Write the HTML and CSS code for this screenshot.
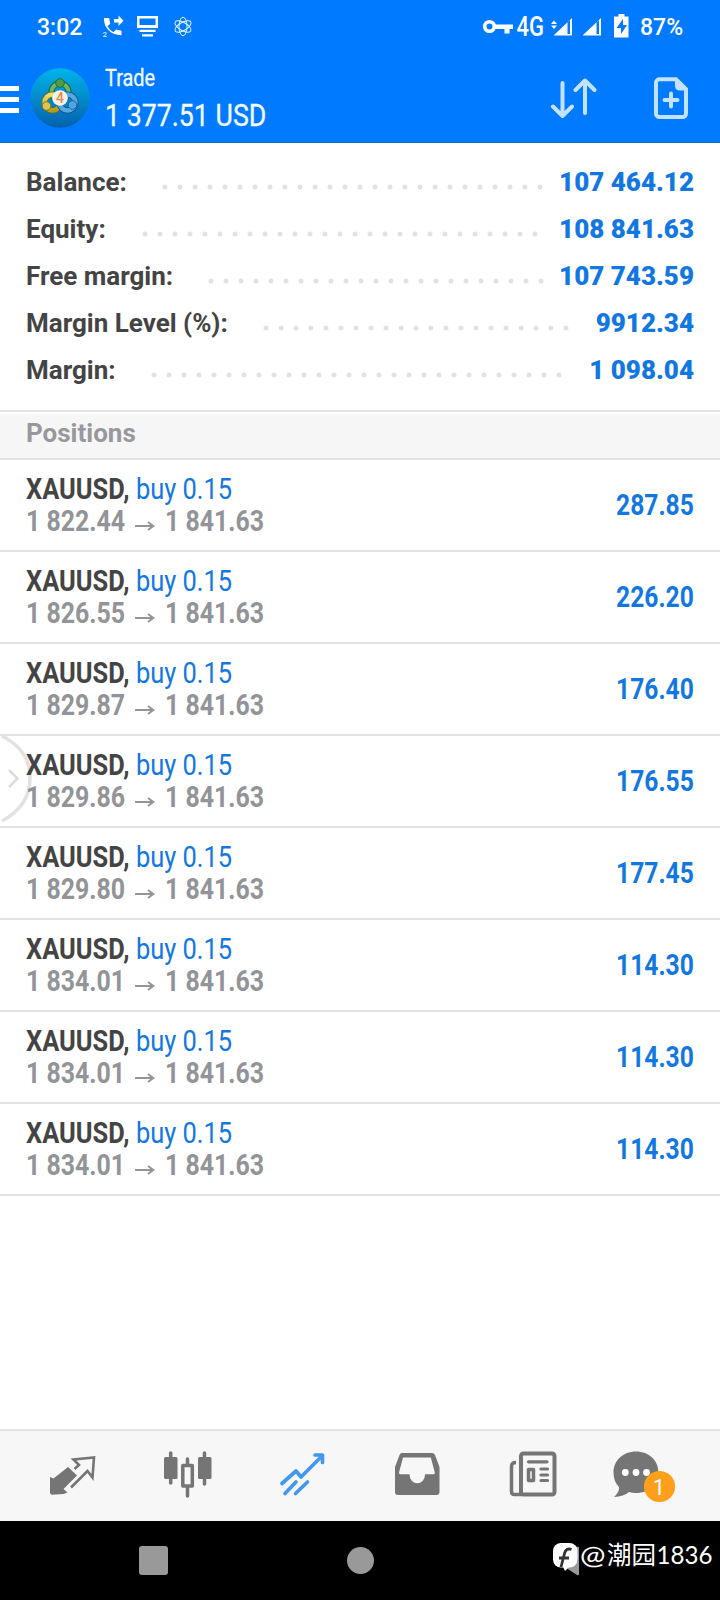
FILE: index.html
```html
<!DOCTYPE html>
<html lang="en">
<head>
<meta charset="utf-8">
<title>Trade</title>
<link rel="stylesheet" href="styles.css">
</head>
<body>
<div class="screen">
  <div class="status">
    <span class="clock">3:02</span>
    <svg class="status-left" width="100" height="44" viewBox="95 0 100 44">
      <g fill="#fff"><path d="M104 18h5l1.300 5.800-2.800 2.400q2 4 6 6l2.600-2.800 5.400 1.300V35.200C111 35.200 103.500 28 104 18z"/><path d="M114 19h4.500v-3.500l5 5.200-5 5.200v-3.500H114z"/></g>
      <text x="102.500" y="37" font-size="8" fill="#d6eaff">2</text>
      <g fill="#fff"><path d="M137 16h21v12h-21zm2.500 2.500v6.500h16v-6.500z" fill-rule="evenodd"/><path d="M139.500 29.800h16v2.200h-16zM142 34.300h11v2.200h-11z"/></g>
      <g fill="none" stroke="#e4f3ff" stroke-width="1"><ellipse cx="183" cy="26.500" rx="4" ry="9.300"/><ellipse cx="183" cy="26.500" rx="4" ry="9" transform="rotate(60 183 26.500)"/><ellipse cx="183" cy="26.500" rx="4" ry="9" transform="rotate(120 183 26.500)"/></g>
    </svg>
    <svg class="status-right" width="160" height="44" viewBox="480 0 160 44" fill="#fff">
      <circle cx="489.500" cy="26.500" r="4.800" fill="none" stroke="#fff" stroke-width="3.600"/>
      <path d="M494 24.500h19v4.500h-3.500v4.500h-5V29H494z"/>
      <text x="516.500" y="36" font-size="27" textLength="27.500" lengthAdjust="spacingAndGlyphs">4G</text>
      <path d="M551 24l3-3.500 3 3.500zM551 25.500h6l-3 3.500z"/>
      <path d="M553.500 35.500L572 18v17.500zm14-13v11.500h2.500V20.300z" fill-rule="evenodd"/>
      <path d="M582.500 35.500L601 18v17.500zm14-13v11.500h2.500V20.300z" fill-rule="evenodd"/>
      <path d="M618.500 14h6v2.500h4v21h-14.500v-21h4.500z"/>
      <path d="M623 19l-6.500 9h4.500v6l6-9h-4z" fill="#007aff"/>
    </svg>
    <span class="battery">87%</span>
  </div>
  <div class="header">
    <svg class="menu" width="20" height="28" viewBox="0 0 20 28" fill="#fff"><path d="M0 0h19v5H0zM0 11h19v5H0zM0 22h19v5H0z"/></svg>
    <svg class="logo" width="60" height="60" viewBox="0 0 60 60">
      <defs>
        <linearGradient id="sky" x1="0" y1="0" x2="0" y2="1"><stop offset="0" stop-color="#00b5ea"/><stop offset="1" stop-color="#0560ad"/></linearGradient>
        <linearGradient id="gold" x1="0" y1="0" x2="0" y2="1"><stop offset="0" stop-color="#e9e06c"/><stop offset="1" stop-color="#b49c1c"/></linearGradient>
      </defs>
      <circle cx="30" cy="30" r="29.700" fill="url(#sky)"/>
      <circle cx="30" cy="24" r="8.500" fill="none" stroke="#1f6a45" stroke-width="6"/><circle cx="30" cy="24" r="8.500" fill="none" stroke="#6fb860" stroke-width="4"/>
      <circle cx="22.500" cy="34.500" r="8" fill="none" stroke="#6f6c1b" stroke-width="6"/><circle cx="22.500" cy="34.500" r="8" fill="none" stroke="url(#gold)" stroke-width="4.500"/>
      <circle cx="37.500" cy="34.500" r="8" fill="none" stroke="#134f8f" stroke-width="6"/><circle cx="37.500" cy="34.500" r="8" fill="none" stroke="#55a9e2" stroke-width="4.500"/>
      <circle cx="30" cy="15" r="4.300" fill="#4c9d4a" stroke="#2b6c3b"/>
      <circle cx="16.500" cy="38" r="4.300" fill="#d9c552" stroke="#857718"/>
      <circle cx="42.500" cy="37" r="4.300" fill="#4da6df" stroke="#1f64a2"/>
      <circle cx="30" cy="30" r="7.800" fill="#f4f1ed"/>
      <text x="30" y="35" font-size="14" text-anchor="middle" font-weight="500" fill="#ee8a42">4</text>
    </svg>
    <div class="titles">
      <span class="title cond">Trade</span>
      <span class="total cond">1 377.51 USD</span>
    </div>
    <svg class="sort" width="48" height="42" viewBox="0 0 48 42" fill="none" stroke="#c3e2ff" stroke-width="4" stroke-linecap="round" stroke-linejoin="round"><path d="M12.500 5v33M3 28.500l9.500 9.500 9.500-9.500M35 35V2.500M25.500 12L35 2.500l9.500 9.500"/></svg>
    <svg class="new" width="36" height="44" viewBox="0 0 36 44" fill="none" stroke="#c3e2ff"><path d="M7 3.300h16L33 13v24.500a3.500 3.500 0 0 1-3.500 3.500H6.500A3.500 3.500 0 0 1 3 37.500v-31A3.500 3.500 0 0 1 7 3.300z" stroke-width="4"/><path d="M22 3v6.500q0 5 5 5h6V12z" fill="#c3e2ff" stroke="none"/><path d="M18 17.500v13M11.500 24h13" stroke-width="4" stroke-linecap="round"/></svg>
  </div>

  <div class="summary">
    <div class="line"><span>Balance:</span><svg class="dots" height="6"><line x1="38" y1="3" x2="416" y2="3"/></svg><b>107 464.12</b></div>
    <div class="line"><span>Equity:</span><svg class="dots" height="6"><line x1="39" y1="3" x2="432" y2="3"/></svg><b>108 841.63</b></div>
    <div class="line"><span>Free margin:</span><svg class="dots" height="6"><line x1="38" y1="3" x2="371" y2="3"/></svg><b>107 743.59</b></div>
    <div class="line"><span>Margin Level (%):</span><svg class="dots" height="6"><line x1="38" y1="3" x2="341" y2="3"/></svg><b>9912.34</b></div>
    <div class="line"><span>Margin:</span><svg class="dots" height="6"><line x1="38" y1="3" x2="446" y2="3"/></svg><b>1 098.04</b></div>
  </div>
  <div class="section">Positions</div>

  <div class="positions">
    <div class="row"><div class="info"><div class="deal cond"><b>XAUUSD,</b> buy 0.15</div><div class="prices"><span class="cond">1 822.44</span><svg width="20" height="12"><use href="#arrow"/></svg><span class="cond">1 841.63</span></div></div><b class="profit cond">287.85</b></div>
    <div class="row"><div class="info"><div class="deal cond"><b>XAUUSD,</b> buy 0.15</div><div class="prices"><span class="cond">1 826.55</span><svg width="20" height="12"><use href="#arrow"/></svg><span class="cond">1 841.63</span></div></div><b class="profit cond">226.20</b></div>
    <div class="row"><div class="info"><div class="deal cond"><b>XAUUSD,</b> buy 0.15</div><div class="prices"><span class="cond">1 829.87</span><svg width="20" height="12"><use href="#arrow"/></svg><span class="cond">1 841.63</span></div></div><b class="profit cond">176.40</b></div>
    <div class="row"><svg class="handle" width="34" height="92" viewBox="0 0 34 92" fill="none" stroke="#e2e2e2"><path d="M2 2Q30 16 30 44T2 87" stroke-width="3.500"/><path d="M9 36l8.500 8.500L9 53" stroke="#dcdcdc" stroke-width="2.500"/></svg><div class="info"><div class="deal cond"><b>XAUUSD,</b> buy 0.15</div><div class="prices"><span class="cond">1 829.86</span><svg width="20" height="12"><use href="#arrow"/></svg><span class="cond">1 841.63</span></div></div><b class="profit cond">176.55</b></div>
    <div class="row"><div class="info"><div class="deal cond"><b>XAUUSD,</b> buy 0.15</div><div class="prices"><span class="cond">1 829.80</span><svg width="20" height="12"><use href="#arrow"/></svg><span class="cond">1 841.63</span></div></div><b class="profit cond">177.45</b></div>
    <div class="row"><div class="info"><div class="deal cond"><b>XAUUSD,</b> buy 0.15</div><div class="prices"><span class="cond">1 834.01</span><svg width="20" height="12"><use href="#arrow"/></svg><span class="cond">1 841.63</span></div></div><b class="profit cond">114.30</b></div>
    <div class="row"><div class="info"><div class="deal cond"><b>XAUUSD,</b> buy 0.15</div><div class="prices"><span class="cond">1 834.01</span><svg width="20" height="12"><use href="#arrow"/></svg><span class="cond">1 841.63</span></div></div><b class="profit cond">114.30</b></div>
    <div class="row"><div class="info"><div class="deal cond"><b>XAUUSD,</b> buy 0.15</div><div class="prices"><span class="cond">1 834.01</span><svg width="20" height="12"><use href="#arrow"/></svg><span class="cond">1 841.63</span></div></div><b class="profit cond">114.30</b></div>
  </div>

  <svg class="tabs" width="720" height="90" viewBox="0 1431 720 90" fill="#757575" stroke-linejoin="round">
    <path d="M50 1477l3.500 1.500L68 1467l9 8.500L63.500 1489l4 3.500-4 1.500-12 .8-1.500-1.500z"/>
    <path d="M71 1487.500l16.500-16.500 5 6.500 1.500-20-20.500 2 5.500 5.500-4.500 4" fill="none" stroke="#757575" stroke-width="2.600" stroke-linejoin="miter"/>
    <g><rect x="164" y="1457" width="13.500" height="22" rx="1.500"/><rect x="198" y="1457" width="13.500" height="22" rx="1.500"/><path d="M170.700 1453v30M204.500 1453v31M187.500 1459v6M187.500 1488v8" stroke="#757575" stroke-width="3.500" stroke-linecap="round"/><rect x="182.800" y="1465.500" width="9.500" height="20.500" fill="none" stroke="#757575" stroke-width="3.500"/></g>
    <g fill="none" stroke="#4399f2" stroke-width="3.700" stroke-linecap="round"><path d="M282 1483.500l14-12.500 5 6 21-21M315 1455h7.500v7.500M285 1493.500l11-11.500M295.500 1493.500l12-11.500"/></g>
    <path d="M402 1453h30q2 0 3 2l4.500 12v25q0 3-3 3H398q-3 0-3-3v-25l4.500-12q.8-2 2.500-2zm1 4.500l-4 15q-.2 1.800 1.200 1.800h9.300a7.800 9 0 0 0 15.600 0h8.500q1.500 0 1.200-1.800l-4-15z" fill-rule="evenodd"/>
    <g fill="none" stroke="#757575" stroke-width="4"><rect x="521" y="1453.500" width="33.500" height="41" rx="2.500"/><path d="M516 1462.500q-4.500 0-4.500 4v25q0 3 3 3H522" stroke-width="3.500"/><path d="M528.500 1461.800H547M541 1469h6.500M541 1475h6.500M541 1480.500h6.500" stroke-width="3.200" stroke-linecap="round"/><rect x="528.500" y="1469.500" width="5" height="11" stroke-width="3.500"/></g>
    <path d="M636 1451.500c13 0 22.500 9 22.500 21S649 1493 636 1493q-4 0-7-1-5 4.500-15 5 5.500-5 5-10-5.500-5.500-5.500-14.500c0-12 9.500-21 22.500-21z"/>
    <g fill="#fff"><circle cx="625.300" cy="1472.500" r="3.400"/><circle cx="636" cy="1472.500" r="3.400"/><circle cx="646.500" cy="1472.500" r="3.400"/></g>
    <circle cx="659.500" cy="1486.500" r="15.600" fill="#ff9f1c"/>
    <text x="659" y="1494.500" font-size="22" text-anchor="middle" fill="#fff">1</text>
  </svg>
  <div class="sysbar">
    <svg width="720" height="79" viewBox="0 1521 720 79" fill="#999">
      <rect x="139" y="1546" width="29" height="29" rx="3"/><circle cx="360.500" cy="1560.500" r="13.500"/><path d="M579 1547v27q0 2-2 1l-23-15 22-13.500z"/>
      <rect x="553" y="1543" width="24.500" height="24.500" rx="8" fill="#fff"/><path d="M563 1567l2 4 5-5z" fill="#fff"/>
      <path d="M571.500 1549.500q-5.500-2-7 4l-3.500 13.500M559 1558h10" stroke="#333" stroke-width="2.800" fill="none"/>
      <text class="mark" y="1564" fill="#fff"><tspan x="580" textLength="25.500" lengthAdjust="spacingAndGlyphs">@</tspan><tspan x="607" textLength="49" lengthAdjust="spacingAndGlyphs">潮园</tspan><tspan x="656.500" textLength="56" lengthAdjust="spacingAndGlyphs">1836</tspan></text>
    </svg>
  </div>
</div>
<svg class="defs" width="0" height="0"><defs><path id="arrow" d="M0 6h18M13 2l5.300 4L13 10" fill="none" stroke="#929497" stroke-width="2"/></defs></svg>
</body>
</html>
```
FILE: styles.css
```css
body { margin: 0; background: #fff; font-family: Roboto, "Noto Sans CJK SC", sans-serif; }
.screen { width: 720px; height: 1600px; display: flex; flex-direction: column; overflow: hidden; }
svg { display: block; flex: none; }
.defs { position: absolute; }
.cond { display: inline-block; transform: scaleX(.83); transform-origin: left; white-space: nowrap; }
.status { height: 54px; box-sizing: border-box; display: flex; background: #007aff; color: #fff; font-size: 23px; font-weight: 500; line-height: 55px; padding-left: 37px; }
.clock { width: 58px; }
.status-right { margin-left: 285px; }
.battery { font-size: 23px; }
.header { height: 89px; box-sizing: border-box; border-bottom: 1px solid #0d6fc9; display: flex; background: #007aff; color: #f2faff; }
.menu { margin-top: 32px; }
.logo { margin: 14px 0 0 10px; }
.titles { width: 445px; padding: 10px 0 0 15px; box-sizing: border-box; display: flex; flex-direction: column; align-items: flex-start; }
.title { font-size: 24px; line-height: 28px; -webkit-text-stroke: .3px; }
.total { font-size: 32px; line-height: 38px; margin-top: 4px; transform: scaleX(.836); -webkit-text-stroke: .3px; }
.sort { margin-top: 24px; margin-left: 15px; }
.new { margin-top: 22px; margin-left: 55px; }
.summary { height: 267px; box-sizing: border-box; padding: 16px 26px 0; }
.line { display: flex; align-items: center; height: 47px; line-height: 47px; font-size: 26px; font-weight: 700; color: #444; }
.line b { color: #1277e1; }
.dots { flex: 1; min-width: 0; margin-top: 9px; }
.dots line { stroke: #e2e2e2; stroke-width: 5; stroke-linecap: round; stroke-dasharray: 0 15; }
.section { height: 50px; box-sizing: border-box; border-top: 2px solid #e3e3e3; border-bottom: 2px solid #e3e3e3; background: #f6f6f6; box-shadow: inset 0 2px #fff; padding-left: 26px; line-height: 43px; font-size: 26px; font-weight: 700; color: #97989b; }
.positions { flex: 1; }
.row { position: relative; height: 92px; box-sizing: border-box; border-bottom: 2px solid #e2e2e2; padding: 13px 26px 0; display: flex; justify-content: space-between; font-size: 30px; }
.info { line-height: 32px; }
.deal { color: #1277e1; transform: scaleX(.848); }
.deal b { color: #444; font-weight: 700; }
.prices { display: flex; align-items: center; font-weight: 700; color: #929497; }
.prices svg { margin: 9px 10px 0 -10px; }
.profit { line-height: 64px; color: #1277e1; transform: scaleX(.82); transform-origin: right; }
.handle { position: absolute; left: 0; top: -2px; }
.tabs { background: #f7f7f7; border-top: 2px solid #e2e2e2; }
.sysbar { background: #000; height: 79px; }
.mark { font-family: Lato, "Noto Sans CJK SC", sans-serif; font-size: 25px; }
```
